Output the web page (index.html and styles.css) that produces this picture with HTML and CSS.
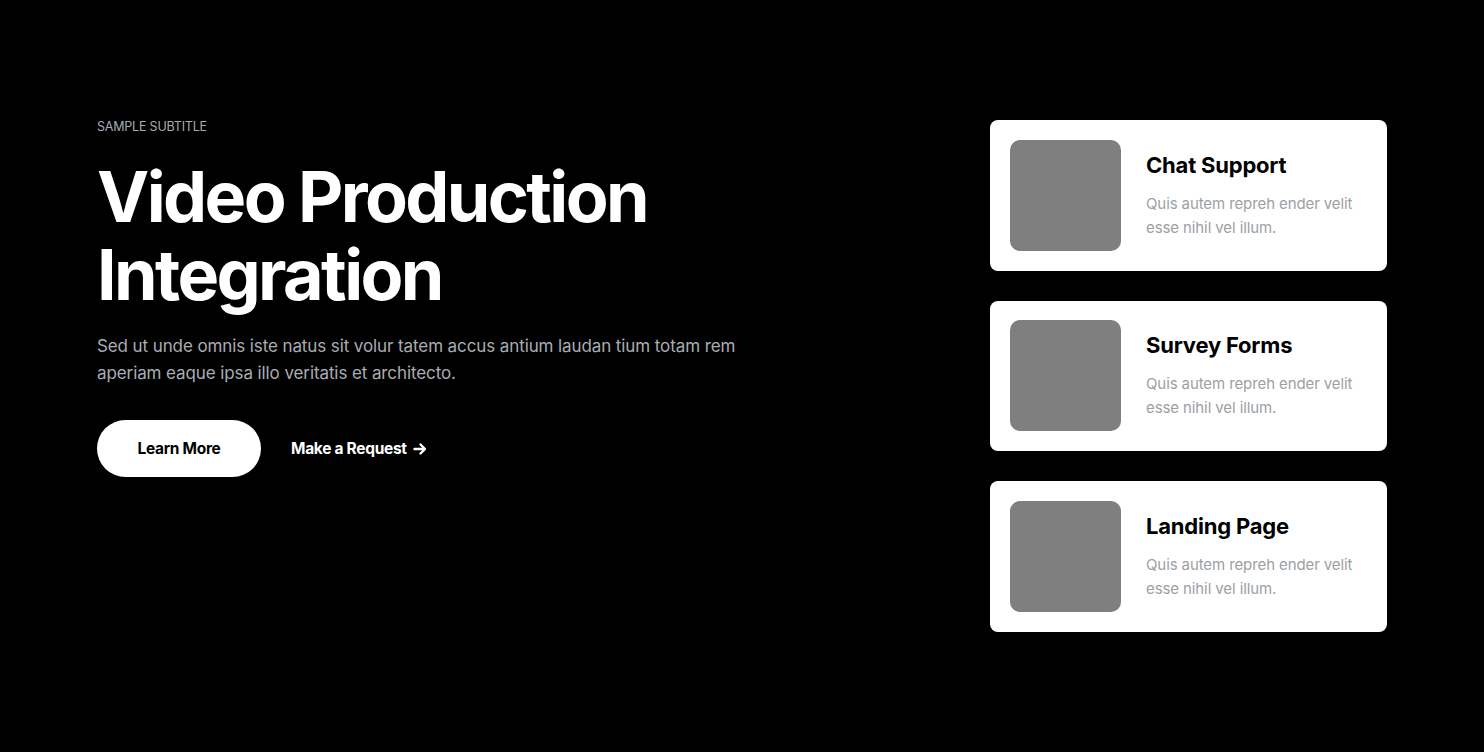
FILE: index.html
```html
<!DOCTYPE html>
<html lang="en">
<head>
<meta charset="utf-8">
<title>Video Production Integration</title>
<link rel="stylesheet" href="styles.css">
</head>
<body>
<section class="hero">
  <div class="container">
    <div class="intro">
      <p class="subtitle">SAMPLE SUBTITLE</p>
      <h1 class="title">Video Production Integration</h1>
      <p class="lead">Sed ut unde omnis iste natus sit volur tatem accus antium laudan tium totam rem aperiam eaque ipsa illo veritatis et architecto.</p>
      <div class="actions">
        <a class="btn-pill" href="#">Learn More</a>
        <a class="link-arrow" href="#">Make a Request
          <svg class="arrow" width="14" height="14" viewBox="0 0 14 14" aria-hidden="true"><path d="M1.5 7h10M7.5 2.5 12 7l-4.5 4.5" fill="none" stroke="#fff" stroke-width="2.4" stroke-linecap="round" stroke-linejoin="round"/></svg>
        </a>
      </div>
    </div>
    <div class="features">
      <div class="card">
        <div class="thumb"></div>
        <div class="card-body">
          <h3 class="card-title">Chat Support</h3>
          <p class="card-text">Quis autem repreh ender velit esse nihil vel illum.</p>
        </div>
      </div>
      <div class="card">
        <div class="thumb"></div>
        <div class="card-body">
          <h3 class="card-title">Survey Forms</h3>
          <p class="card-text">Quis autem repreh ender velit esse nihil vel illum.</p>
        </div>
      </div>
      <div class="card">
        <div class="thumb"></div>
        <div class="card-body">
          <h3 class="card-title">Landing Page</h3>
          <p class="card-text">Quis autem repreh ender velit esse nihil vel illum.</p>
        </div>
      </div>
    </div>
  </div>
</section>
</body>
</html>
```

FILE: styles.css
```css
* { box-sizing: border-box; }
html, body { margin: 0; padding: 0; background: #000; }
body {
  font-family: Inter, "Noto Sans", "Liberation Sans", sans-serif;
  color: #fff;
  min-height: 752px;
}
.hero { padding: 120px 0 120px; }
.container {
  width: 1290px;
  margin: 0 auto;
  display: flex;
  justify-content: space-between;
  align-items: flex-start;
}
.intro { width: 680px; }
.subtitle {
  margin: 0;
  font-size: 12.5px;
  line-height: 14px;
  color: #a6abb3;
  letter-spacing: -0.2px;
}
.title {
  margin: 24px 0 0;
  font-size: 70px;
  line-height: 78px;
  font-weight: 700;
  letter-spacing: -2.6px;
  color: #fff;
  width: 600px;
}
.lead {
  margin: 19px 0 0;
  font-size: 17px;
  line-height: 27px;
  color: #a9adb4;
  letter-spacing: -0.1px;
  width: 680px;
}
.actions {
  margin-top: 33px;
  display: flex;
  align-items: center;
  gap: 30px;
}
.btn-pill {
  display: inline-flex;
  align-items: center;
  justify-content: center;
  width: 164px;
  height: 57px;
  border-radius: 29px;
  background: #fff;
  color: #000;
  font-size: 15.5px;
  font-weight: 700;
  letter-spacing: -0.3px;
  text-decoration: none;
}
.link-arrow {
  display: inline-flex;
  align-items: center;
  gap: 6px;
  color: #fff;
  font-size: 15.5px;
  font-weight: 700;
  letter-spacing: -0.3px;
  text-decoration: none;
}
.arrow { display: block; }
.features {
  width: 397px;
  display: flex;
  flex-direction: column;
  gap: 30px;
}
.card {
  background: #fff;
  border-radius: 8px;
  padding: 20px;
  height: 150.5px;
  display: flex;
  align-items: center;
  gap: 25px;
}
.thumb {
  flex: 0 0 111px;
  height: 111px;
  border-radius: 10px;
  background: #7f7f7f;
}
.card-body { flex: 1; padding-bottom: 0; }
.card-title {
  margin: 0;
  font-size: 22px;
  line-height: 28px;
  font-weight: 700;
  letter-spacing: -0.2px;
  color: #000;
}
.card-text {
  margin: 13px 0 0;
  font-size: 15px;
  line-height: 24px;
  color: #9c9fa4;
  letter-spacing: -0.1px;
}
```
